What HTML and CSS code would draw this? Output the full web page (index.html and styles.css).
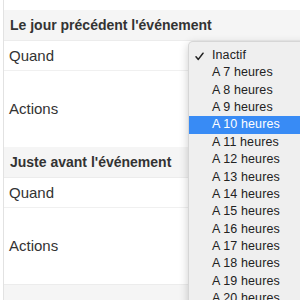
FILE: index.html
```html
<!DOCTYPE html>
<html lang="fr">
  <head>
    <meta charset="UTF-8" />
    <title>Rappels</title>
    <link rel="stylesheet" href="styles.css">
  </head>
  <body>
    <div class="page">
      <div class="panel">
        <div class="top-gap"></div>

        <div class="block-head">Le jour précédent l'événement</div>
        <div class="row row-when">Quand</div>
        <div class="row row-actions">Actions</div>

        <div class="block-head">Juste avant l'événement</div>
        <div class="row row-when">Quand</div>
        <div class="row row-actions">Actions</div>

        <div class="block-head block-next"></div>
      </div>

      <ul class="menu">
        <li class="menu-item checked">
          <svg class="check" width="9" height="9" viewBox="0 0 9 9">
            <path d="M1 4.8 L3.3 7.4 L8 1.2" fill="none" stroke="#222" stroke-width="1.5" stroke-linecap="round" stroke-linejoin="round" />
          </svg>
          Inactif
        </li>
        <li class="menu-item">A 7 heures</li>
        <li class="menu-item">A 8 heures</li>
        <li class="menu-item">A 9 heures</li>
        <li class="menu-item selected">A 10 heures</li>
        <li class="menu-item">A 11 heures</li>
        <li class="menu-item">A 12 heures</li>
        <li class="menu-item">A 13 heures</li>
        <li class="menu-item">A 14 heures</li>
        <li class="menu-item">A 15 heures</li>
        <li class="menu-item">A 16 heures</li>
        <li class="menu-item">A 17 heures</li>
        <li class="menu-item">A 18 heures</li>
        <li class="menu-item">A 19 heures</li>
        <li class="menu-item">A 20 heures</li>
        <li class="menu-item">A 21 heures</li>
      </ul>
    </div>
  </body>
</html>
```

FILE: styles.css
```css
body {
  margin: 0;
  font-family: "Liberation Sans", Arial, sans-serif;
  color: #333;
  background: #fff;
  overflow: hidden;
}

.page {
  position: relative;
  width: 300px;
  height: 300px;
  overflow: hidden;
}

.panel {
  margin-left: 3px;
  border-left: 1px solid #e2e2e2;
  height: 300px;
}

.top-gap {
  height: 10px;
}

.block-head {
  height: 31px;
  line-height: 31px;
  padding-left: 6px;
  background-color: #f5f5f5;
  font-size: 14px;
  font-weight: bold;
  color: #333;
  border-bottom: 1px solid #ececec;
  box-sizing: border-box;
}

.block-next {
  height: 20px;
  border-top: 1px solid #ececec;
}

.row {
  padding-left: 5px;
  font-size: 15px;
  color: #333;
  box-sizing: border-box;
}

.row-when {
  height: 30px;
  line-height: 30px;
  border-bottom: 1px solid #f0f0f0;
}

.row-actions {
  height: 76px;
  line-height: 76px;
}

/* menu deroulant ouvert (style mac) */
.menu {
  position: absolute;
  left: 188px;
  top: 41px;
  width: 140px;
  margin: 0;
  padding: 5px 0 0;
  list-style: none;
  background-color: #efefef;
  border: 1px solid rgba(0, 0, 0, 0.1);
  border-radius: 5px;
  box-shadow: 0 3px 10px rgba(0, 0, 0, 0.2);
}

.menu-item {
  position: relative;
  height: 17.36px;
  line-height: 17.36px;
  padding-left: 23px;
  font-size: 12.5px;
  letter-spacing: 0.1px;
  color: #222;
}

.menu-item.selected {
  background-color: #388bf5;
  color: #fff;
}

.check {
  position: absolute;
  left: 6px;
  top: 5px;
}
```
